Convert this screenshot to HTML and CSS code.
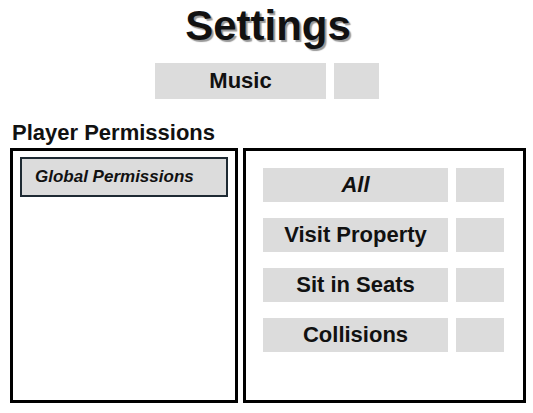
FILE: index.html
```html
<!DOCTYPE html>
<html lang="en">
<head>
    <meta charset="UTF-8">
    <meta name="viewport" content="width=device-width, initial-scale=1.0">
    <title>Settings</title>
    <link rel="stylesheet" href="styles.css">
</head>
<body>

<div class="settings">
    <h1 class="title">Settings</h1>

    <div class="tabs">
        <button class="tab-main">Music</button>
        <button class="tab-toggle"></button>
    </div>

    <h2 class="section-title">Player Permissions</h2>

    <div class="panels">
        <div class="panel player-list">
            <button class="player-item">Global Permissions</button>
        </div>
        <div class="panel perm-list">
            <div class="perm-row">
                <button class="perm-name all">All</button>
                <button class="perm-toggle"></button>
            </div>
            <div class="perm-row">
                <button class="perm-name">Visit Property</button>
                <button class="perm-toggle"></button>
            </div>
            <div class="perm-row">
                <button class="perm-name">Sit in Seats</button>
                <button class="perm-toggle"></button>
            </div>
            <div class="perm-row">
                <button class="perm-name">Collisions</button>
                <button class="perm-toggle"></button>
            </div>
        </div>
    </div>
</div>

</body>
</html>
```

FILE: styles.css
```css
* {
    box-sizing: border-box;
}
body {
    font-family: 'Liberation Sans', Arial, sans-serif;
    background-color: #ffffff;
    color: #111;
    margin: 0;
}
.settings {
    padding: 0 7px 0 10px;
}
button {
    font-family: inherit;
    font-weight: bold;
    color: #111;
    background-color: #dcdcdc;
    border: none;
    padding: 0;
    margin: 0;
}
.title {
    font-size: 42px;
    line-height: 48px;
    margin: 2px 0 0;
    text-align: center;
    text-shadow: 2px 2px 1px #999;
}
.tabs {
    display: flex;
    justify-content: center;
    gap: 8px;
    margin: 13px 2px 0 0;
}
.tab-main {
    width: 171px;
    height: 36px;
    font-size: 22px;
}
.tab-toggle {
    width: 45px;
    height: 36px;
}
.section-title {
    font-size: 22px;
    line-height: 26px;
    margin: 21px 0 0 2px;
}
.panels {
    display: flex;
    gap: 5px;
    margin-top: 2px;
}
.panel {
    border: 3px solid #000;
    height: 255px;
}
.player-list {
    width: 228px;
    padding: 6px 7px;
}
.player-item {
    display: block;
    width: 100%;
    height: 40px;
    border: 2px solid #1e2a33;
    text-align: left;
    padding: 0 0 0 13px;
    font-size: 17px;
    font-style: italic;
}
.perm-list {
    width: 283px;
    padding: 17px 18px 0 17px;
    display: flex;
    flex-direction: column;
    gap: 16px;
}
.perm-row {
    display: flex;
    gap: 8px;
}
.perm-name {
    width: 185px;
    height: 34px;
    font-size: 22px;
}
.perm-name.all {
    font-style: italic;
}
.perm-toggle {
    width: 48px;
    height: 34px;
}
```
